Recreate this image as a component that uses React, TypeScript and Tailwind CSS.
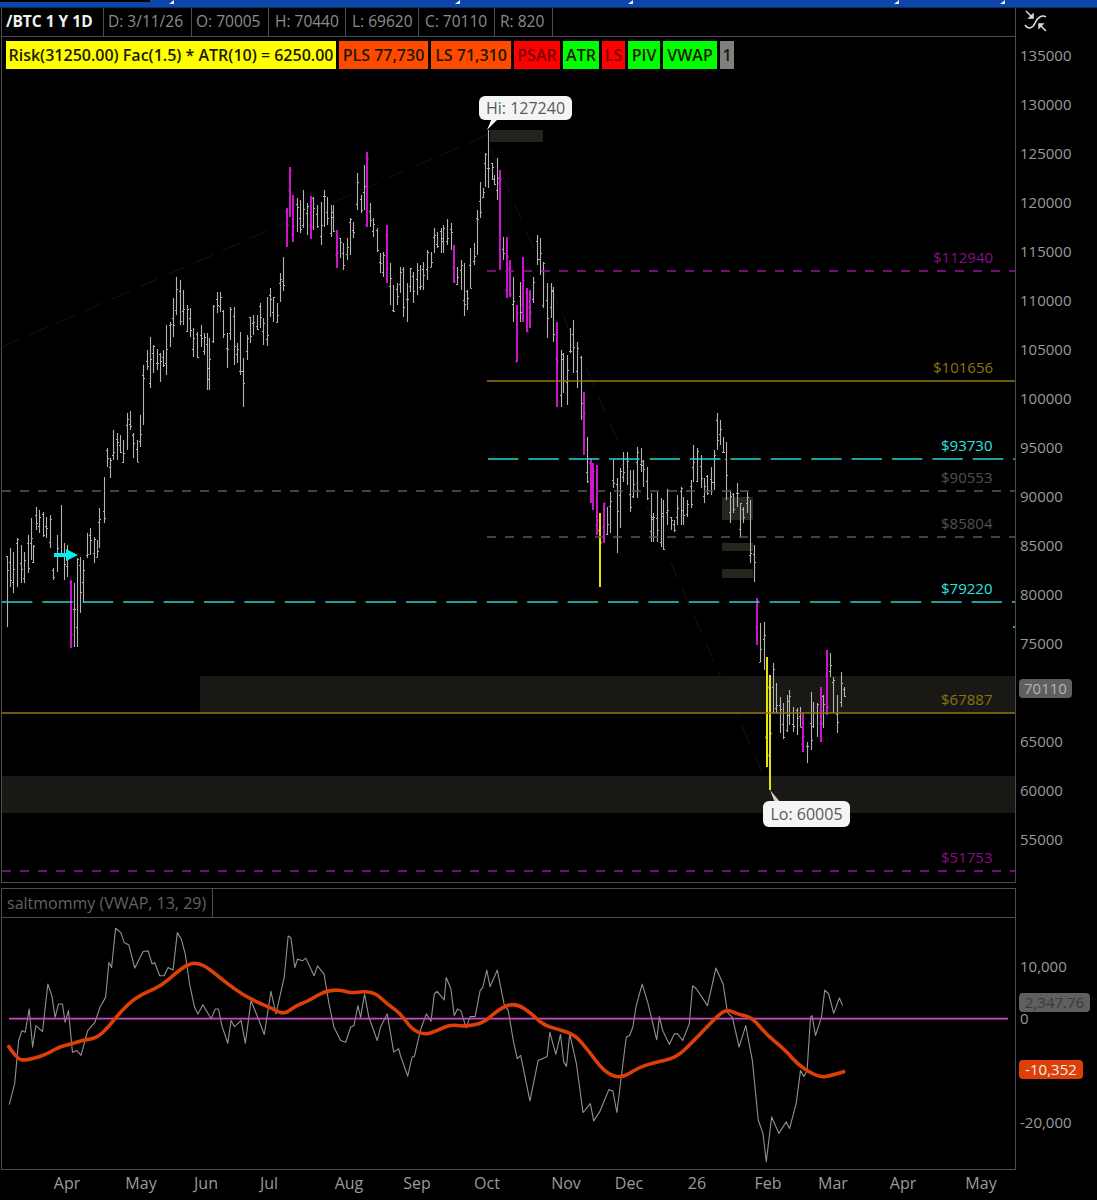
const bars: [number, number, number][] = [
  [7,556,627],[10,548,587],[13,552,593],[17,538,587],[21,545,583],[24,552,583],[28,535,573],[31,518,560],[33,545,563],[36,507,530],
  [39,510,533],[43,512,537],[46,517,538],[50,515,548],[53,568,580],[57,535,572],[61,505,557],[64,543,580],[67,545,577],[71,580,648],
  [74,583,647],[77,558,647],[80,557,613],[83,560,603],[87,533,558],[90,528,555],[94,537,563],[97,540,557],[99,508,548],[104,477,523],
  [107,448,467],[110,458,478],[113,430,460],[117,433,460],[120,435,453],[123,440,463],[127,413,450],[130,411,430],[133,433,458],[137,440,462],
  [140,415,447],[143,365,425],[147,350,370],[150,337,388],[153,345,373],[157,349,370],[160,353,382],[163,350,367],[166,325,375],[170,322,347],
  [173,298,337],[176,277,315],[180,280,325],[183,290,325],[187,305,332],[190,308,337],[193,328,357],[197,332,358],[201,325,347],[204,333,355],
  [207,333,390],[209,338,390],[213,305,343],[217,292,313],[220,292,312],[223,310,338],[227,333,368],[230,307,340],[234,307,365],[237,343,363],
  [240,332,375],[243,358,407],[247,335,360],[250,317,343],[253,315,335],[257,315,330],[260,303,328],[263,318,345],[267,297,346],[270,288,317],
  [273,297,322],[277,303,323],[280,273,302],[283,257,291],[287,208,247],[290,167,217],[293,195,242],[297,198,232],[300,200,233],[303,190,228],
  [307,203,235],[311,196,239],[313,197,230],[317,205,228],[321,202,245],[324,190,227],[327,197,225],[331,205,237],[333,205,232],[337,230,268],
  [340,238,258],[343,243,270],[347,238,260],[350,218,255],[353,222,238],[357,173,210],[361,195,213],[364,165,210],[367,152,227],[370,203,227],
  [373,218,237],[377,228,252],[380,253,273],[383,252,277],[387,225,283],[390,263,305],[393,285,312],[397,283,305],[400,267,293],[403,267,317],
  [407,283,322],[410,268,292],[413,272,303],[417,263,295],[420,265,290],[423,262,290],[427,250,280],[431,252,267],[434,228,253],[437,232,248],
  [441,228,253],[443,225,253],[447,219,245],[451,223,250],[454,245,283],[457,267,285],[461,260,290],[464,263,316],[467,290,310],[470,248,288],
  [474,243,265],[477,210,255],[480,182,218],[483,188,198],[485,153,187],[488,130,188],[492,163,180],[494,175,185],[497,158,200],[500,170,270],
  [503,237,260],[507,237,298],[510,260,297],[513,277,322],[517,305,362],[520,282,322],[523,257,322],[527,288,332],[530,290,328],[533,277,303],
  [537,235,265],[540,238,275],[543,262,308],[547,283,338],[551,283,318],[553,287,342],[557,322,407],[561,350,407],[563,353,393],[567,355,405],
  [570,328,353],[573,320,373],[577,342,388],[581,356,420],[584,392,455],[587,437,483],[591,458,503],[593,463,510],[597,465,535],[600,513,587],
  [604,503,543],[607,507,535],[610,492,533],[613,460,488],[617,478,553],[620,468,528],[623,452,482],[627,452,485],[630,470,512],[633,470,498],
  [637,447,498],[641,448,472],[643,460,487],[647,467,500],[651,493,542],[653,513,542],[657,492,542],[661,498,547],[663,500,550],[667,489,525],
  [671,517,530],[674,520,532],[677,495,525],[681,487,525],[683,497,525],[687,500,517],[691,480,508],[693,445,482],[697,448,482],[701,455,488],
  [704,478,503],[707,475,495],[711,467,495],[714,450,490],[717,413,450],[720,420,445],[723,437,453],[726,442,500],[730,490,523],[733,493,513],
  [737,483,507],[740,503,537],[743,507,523],[747,492,513],[750,500,563],[754,545,582],[757,598,645],[760,623,662],[764,622,670],[767,657,767],
  [770,675,790],[773,663,713],[776,683,713],[780,697,733],[783,703,739],[787,695,732],[789,690,725],[793,707,732],[797,708,735],[800,707,727],
  [803,713,752],[807,742,763],[811,692,750],[813,702,728],[817,703,737],[821,687,742],[823,695,728],[827,650,715],[830,653,677],[833,677,713],
  [837,695,733],[841,672,707],[844,687,697],
]

const magentaBars = new Set([71,287,290,293,311,337,367,387,454,500,507,510,517,523,527,530,557,584,591,593,597,604,757,803,821,827])
const yellowBars = new Set([600,767,770])

function barsPath(filter: (x: number) => boolean, shift: number) {
  let d = ""
  bars.forEach(([x, top, bottom], i) => {
    if (!filter(x)) return
    const open = Math.round(top + ((bottom - top) * ((i * 37) % 100)) / 100) + 0.5
    const close = Math.round(top + ((bottom - top) * ((i * 61 + 20) % 100)) / 100) + 0.5
    const bx = x + shift
    d += `M${bx} ${top}V${bottom}M${bx - 1.5} ${open}H${bx}M${bx} ${close}H${bx + 1.5}`
  })
  return d
}

function fromCrop(ox: number, oy: number, pts: number[][]) {
  return pts.map(([x, y]) => [ox + x / 3, oy + y / 3])
}

function toPolyline(pts: number[][]) {
  return pts.map(([x, y]) => `${x.toFixed(1)},${y.toFixed(1)}`).join(" ")
}

// rounds the corners between points, the average line has no sharp turns
function toSmoothPath(pts: number[][]) {
  let d = `M${pts[0][0].toFixed(1)} ${pts[0][1].toFixed(1)}`
  for (let i = 1; i < pts.length - 1; i++) {
    const mx = (pts[i][0] + pts[i + 1][0]) / 2
    const my = (pts[i][1] + pts[i + 1][1]) / 2
    d += `Q${pts[i][0].toFixed(1)} ${pts[i][1].toFixed(1)} ${mx.toFixed(1)} ${my.toFixed(1)}`
  }
  const last = pts[pts.length - 1]
  return d + `L${last[0].toFixed(1)} ${last[1].toFixed(1)}`
}

const grayLine = toPolyline([
  ...fromCrop(0, 870, [[22,703],[38,640],[50,510],[60,480],[70,485],[82,415],[92,530],[102,465],[122,483],[138,340],[150,375],[160,440],[170,400],[182,400],[190,455],[200,420],[212,545],[225,540],[238,555],[258,480],[280,455],[295,410],[312,380],[322,275],[330,290],[342,172],[358,185],[368,215],[382,222],[400,292],[425,242],[440,240],[452,280],[460,275],[475,315],[488,315],[500,290],[515,298],[528,185],[540,205],[552,250],[565,340],[580,410],[590,430],[605,402],[630,445],[642,415],[652,415],[662,465],[680,518],[690,450],[700,468],[720,450],[733,518],[750,390],[770,440],[790,492],[810,362],[825,430],[850,320],[862,195],[870,200],[882,290],[890,265],[905,270],[915,262],[940,315],[950,285],[970,310],[985,400],[1000,470],[1020,510],[1035,515],[1050,470],[1060,465],[1072,405],[1080,440],[1092,370],[1105,440],[1130,510],[1140,470],[1160,430],[1180,545],[1195,535]]),
  ...fromCrop(400, 930, [[0,375],[22,437],[35,380],[42,378],[60,300],[78,250],[92,272],[102,190],[110,182],[132,208],[138,140],[152,175],[162,255],[172,235],[182,240],[198,292],[210,258],[225,258],[240,180],[248,170],[260,118],[270,168],[292,118],[312,220],[325,240],[340,330],[352,385],[362,375],[390,512],[415,390],[442,378],[450,305],[468,372],[482,312],[492,395],[500,408],[510,310],[530,400],[550,547],[572,520],[582,572],[600,545],[628,478],[640,482],[652,547],[680,320],[690,315],[700,290],[710,225],[728,160],[745,215],[772,328],[780,258],[790,300],[810,342],[825,310],[835,310],[850,330],[870,280],[880,165],[892,175],[925,225]]),
  ...fromCrop(700, 880, [[50,262],[72,310],[85,395],[100,410],[120,500],[140,435],[160,540],[178,720],[192,760],[202,845],[218,710],[240,760],[262,725],[272,745],[292,670],[305,570],[315,588],[325,570],[335,410],[340,405],[350,465],[368,410],[378,328],[390,340],[405,398],[422,352],[432,375]]),
])

const orangeLine = toSmoothPath([
  ...fromCrop(0, 870, [[20,528],[45,565],[70,570],[110,560],[140,548],[175,528],[210,520],[240,510],[285,503],[320,470],[360,420],[400,383],[440,362],[480,345],[520,310],[555,282],[590,275],[625,295],[680,340],[730,375],[770,395],[810,412],[850,432],[880,408],[920,392],[975,360],[1020,358],[1050,367],[1090,362],[1125,367],[1160,400]]),
  ...fromCrop(400, 930, [[0,248],[35,298],[75,313],[110,300],[150,282],[195,288],[250,277],[280,250],[320,222],[355,222],[390,245],[430,283],[480,298],[525,312],[570,365],[610,420],[660,447],[720,410],[770,395],[830,382],[880,335],[960,250]]),
  ...fromCrop(700, 880, [[85,387],[120,402],[160,410],[200,460],[260,510],[300,555],[360,592],[400,585],[435,574]]),
])

const quote = [
  { text: "D: 3/11/26", cell: "w-[88px] pl-[4px]" },
  { text: "O: 70005", cell: "w-[77px] pl-[4px]" },
  { text: "H: 70440", cell: "w-[77px] pl-[6px]" },
  { text: "L: 69620", cell: "w-[73px] pl-[6px]" },
  { text: "C: 70110", cell: "w-[76px] pl-[6px]" },
  { text: "R: 820", cell: "w-[58px] pl-[5px]" },
]

const chips = [
  { text: "Risk(31250.00) Fac(1.5) * ATR(10) = 6250.00", cls: "w-[330px] bg-[#ffff00]" },
  { text: "PLS 77,730", cls: "w-[89px] bg-[#ff4a00]" },
  { text: "LS 71,310", cls: "w-[80px] bg-[#ff4a00]" },
  { text: "PSAR", cls: "w-[46px] bg-[#ff0000] text-[#7a0000]" },
  { text: "ATR", cls: "w-[36px] bg-[#00ff00]" },
  { text: "LS", cls: "w-[23px] bg-[#ff0000] text-[#7a0000]" },
  { text: "PIV", cls: "w-[32px] bg-[#00ff00]" },
  { text: "VWAP", cls: "w-[54px] bg-[#00ff00]" },
  { text: "1", cls: "w-[14px] bg-[#808080]" },
]

const levels = [
  { y: 271, x1: 487, color: "#a010a0", dash: "9 9", label: "$112940", labelColor: "#860f86", lx: 933 },
  { y: 381, x1: 487, color: "#92780e", dash: "", label: "$101656", labelColor: "#8a7410", lx: 933 },
  { y: 459, x1: 488, color: "#28d4d4", dash: "30.4 10", label: "$93730", labelColor: "#2fe0e0", lx: 941 },
  { y: 491, x1: 2, color: "#585858", dash: "9 9", label: "$90553", labelColor: "#505050", lx: 941 },
  { y: 537, x1: 487, color: "#585858", dash: "9 9", label: "$85804", labelColor: "#505050", lx: 941 },
  { y: 602, x1: 2, color: "#28d4d4", dash: "30.4 10", label: "$79220", labelColor: "#2fe0e0", lx: 941 },
  { y: 713, x1: 2, color: "#92780e", dash: "", label: "$67887", labelColor: "#8a7410", lx: 941 },
  { y: 871, x1: 2, color: "#a010a0", dash: "9 9", label: "$51753", labelColor: "#860f86", lx: 941 },
]

// 70000 sits under the last price tag, so that row stays empty
const prices = ["135000","130000","125000","120000","115000","110000","105000","100000","95000","90000","85000","80000","75000","","65000","60000","55000"]

const months = [
  { m: "Apr", w: "w-[60px]" }, { m: "May", w: "w-[88px]" }, { m: "Jun", w: "w-[42px]" }, { m: "Jul", w: "w-[84px]" },
  { m: "Aug", w: "w-[76px]" }, { m: "Sep", w: "w-[60px]" }, { m: "Oct", w: "w-[80px]" }, { m: "Nov", w: "w-[78px]" },
  { m: "Dec", w: "w-[48px]" }, { m: "26", w: "w-[88px]" }, { m: "Feb", w: "w-[54px]" }, { m: "Mar", w: "w-[76px]" },
  { m: "Apr", w: "w-[64px]" }, { m: "May", w: "w-[92px]" },
]

function TopStrip() {
  return (
    <div className="flex h-[8px] shrink-0 items-start bg-[#0b46a8] border-b border-[#0a2f6c]">
      <div className="h-[2px] w-[150px] bg-black" />
      <svg width="6" height="4" className="ml-[18px]"><path d="M6 0V4H1z" fill="#e8eef8" /></svg>
      <svg width="6" height="4" className="ml-[280px]"><path d="M6 0V4H1z" fill="#e8eef8" /></svg>
      <svg width="6" height="4" className="ml-[167px]"><path d="M6 0V4H1z" fill="#e8eef8" /></svg>
      <svg width="6" height="4" className="ml-[260px]"><path d="M6 0V4H1z" fill="#e8eef8" /></svg>
      <svg width="6" height="4" className="ml-[100px]"><path d="M6 0V4H1z" fill="#e8eef8" /></svg>
    </div>
  )
}

function MainChart() {
  return (
    <svg width="1013" height="845" viewBox="2 37 1013 845" className="block">
      {/* supply / demand zones */}
      <rect x="200" y="676" width="815" height="37" fill="#191815" />
      <rect x="2" y="776" width="1013" height="37" fill="#191815" />
      <rect x="490" y="130" width="53" height="12" fill="#23221d" />
      <rect x="722" y="497" width="31" height="23" fill="#26251f" />
      <rect x="722" y="543" width="31" height="8" fill="#26251f" />
      <rect x="722" y="569" width="31" height="9" fill="#26251f" />

      {/* trend lines, barely visible */}
      <line x1="2" y1="347" x2="487" y2="135" stroke="#171313" strokeDasharray="20 10" />
      <line x1="490" y1="148" x2="770" y2="790" stroke="#171313" strokeDasharray="20 10" />

      <path d={barsPath((x) => !magentaBars.has(x) && !yellowBars.has(x), 0.5)} stroke="#b2b2b2" strokeWidth="1.1" fill="none" />
      <path d={barsPath((x) => magentaBars.has(x), 0)} stroke="#d418d4" strokeWidth="1.9" fill="none" />
      <path d={barsPath((x) => yellowBars.has(x), 0)} stroke="#eeee10" strokeWidth="1.9" fill="none" />

      {levels.map((l) => (
        <g key={l.y}>
          <line x1={l.x1} y1={l.y} x2="1015" y2={l.y} stroke={l.color} strokeWidth="1.7" strokeDasharray={l.dash || undefined} />
          <text x={l.lx} y={l.y - 8} fill={l.labelColor} fontSize="15">{l.label}</text>
        </g>
      ))}

      <path d="M54 553H66V549L78 555L66 561V557H54Z" fill="#00f0f0" />
      <circle cx="1014" cy="627" r="1" fill="#2fe0e0" />

      <path d="M487 130L492 118H499Z" fill="#f4f4f4" />
      <path d="M770 790L775 803H781Z" fill="#cfcfcf" />
    </svg>
  )
}

function LowerPlot() {
  return (
    <svg width="1013" height="252" viewBox="2 917 1013 252" className="block">
      <polyline points={grayLine} fill="none" stroke="#929292" strokeWidth="1.1" strokeLinejoin="round" />
      <line x1="7" y1="1018" x2="1010" y2="1018" stroke="#c64cc6" strokeWidth="1.8" />
      <path d={orangeLine} fill="none" stroke="#dd3f06" strokeWidth="3.6" strokeLinejoin="round" strokeLinecap="round" />
    </svg>
  )
}

export default function App() {
  return (
    <div className="flex h-[1200px] w-[1097px] flex-col overflow-hidden bg-black font-['Open_Sans',sans-serif] text-[15px] leading-none">
      <TopStrip />

      {/* upper panel */}
      <div className="flex h-[875px] shrink-0">
        <div className="ml-[1px] flex w-[1015px] shrink-0 flex-col border-x border-b border-[#4c4c4c]">
          <div className="flex h-[29px] shrink-0 items-stretch border-b border-[#4c4c4c] text-[15.5px]">
            <div className="flex w-[102px] items-center border-r border-[#4c4c4c] pl-[4px] font-bold text-[#f0f0f0]">/BTC 1 Y 1D</div>
            {quote.map((q) => (
              <div key={q.text} className={`flex items-center border-r border-[#4c4c4c] text-[#8c8c8c] ${q.cell}`}>{q.text}</div>
            ))}
          </div>

          <div className="relative flex-1">
            <MainChart />
            <div className="absolute left-[4px] top-[4px] flex gap-[3px]">
              {chips.map((c) => (
                <div key={c.text} className={`flex h-[28px] items-center justify-center whitespace-nowrap text-[16px] font-semibold text-[#1c1c00] ${c.cls}`}>{c.text}</div>
              ))}
            </div>
            <div className="absolute left-[477px] top-[59px] flex h-[24px] w-[93px] items-center justify-center rounded-md bg-[#f4f4f4] text-[16px] text-[#5a5a5a]">Hi: 127240</div>
            <div className="absolute left-[761px] top-[764px] flex h-[26px] w-[87px] items-center justify-center rounded-md bg-[#f4f4f4] text-[16px] text-[#5a5a5a]">Lo: 60005</div>
          </div>
        </div>

        <div className="relative flex-1 pl-[4px] text-[#9a9a9a]">
          <div className="h-[22.5px]">
            <svg width="24" height="22" viewBox="0 0 24 22" className="ml-[4px] translate-y-[2px]" fill="none" stroke="#dcdcdc" strokeWidth="1.5">
              <path d="M2 1L8 7" />
              <path d="M9.5 8.5V3L4 8.5Z" fill="#dcdcdc" strokeWidth="0.5" />
              <path d="M1 15C4 20 9 18 11 13S18 4 22 7" />
              <path d="M22 21L16 15" />
              <path d="M14.5 13.5H20L14.5 19Z" fill="#dcdcdc" strokeWidth="0.5" />
            </svg>
          </div>
          {prices.map((p, i) => (
            <div key={i} className="flex h-[49px] items-center">{p}</div>
          ))}
          <div className="absolute left-[3px] top-[671px] flex h-[19px] w-[53px] items-center justify-center rounded-[4px] bg-[#5f5f5f] text-[#b4b4b4]">70110</div>
        </div>
      </div>

      {/* lower panel */}
      <div className="mt-[5px] flex h-[282px] shrink-0">
        <div className="ml-[1px] flex w-[1015px] shrink-0 flex-col border border-[#4c4c4c]">
          <div className="flex h-[29px] shrink-0 border-b border-[#4c4c4c]">
            <div className="flex w-[211px] items-center border-r border-[#4c4c4c] pl-[5px] text-[16px] text-[#626262]">saltmommy (VWAP, 13, 29)</div>
          </div>
          <LowerPlot />
        </div>
        <div className="relative flex-1 pl-[4px] pt-[68px] text-[#9a9a9a]">
          <div className="flex h-[20px] items-center">10,000</div>
          <div className="mt-[32px] flex h-[20px] items-center">0</div>
          <div className="mt-[84px] flex h-[20px] items-center">-20,000</div>
          <div className="absolute left-[3px] top-[105px] flex h-[19px] w-[71px] items-center justify-center rounded-[4px] bg-[#5f5f5f] text-[#3a3a3a]">2,347.76</div>
          <div className="absolute left-[3px] top-[172px] flex h-[19px] w-[64px] items-center justify-center rounded-[4px] bg-[#dd3f06] text-[#f0f0f0]">-10,352</div>
        </div>
      </div>

      {/* time axis */}
      <div className="flex h-[26px] items-center pl-[37px] text-[16px] text-[#9a9a9a]">
        {months.map((t, i) => (
          <div key={i} className={`text-center ${t.w}`}>{t.m}</div>
        ))}
      </div>
    </div>
  )
}
